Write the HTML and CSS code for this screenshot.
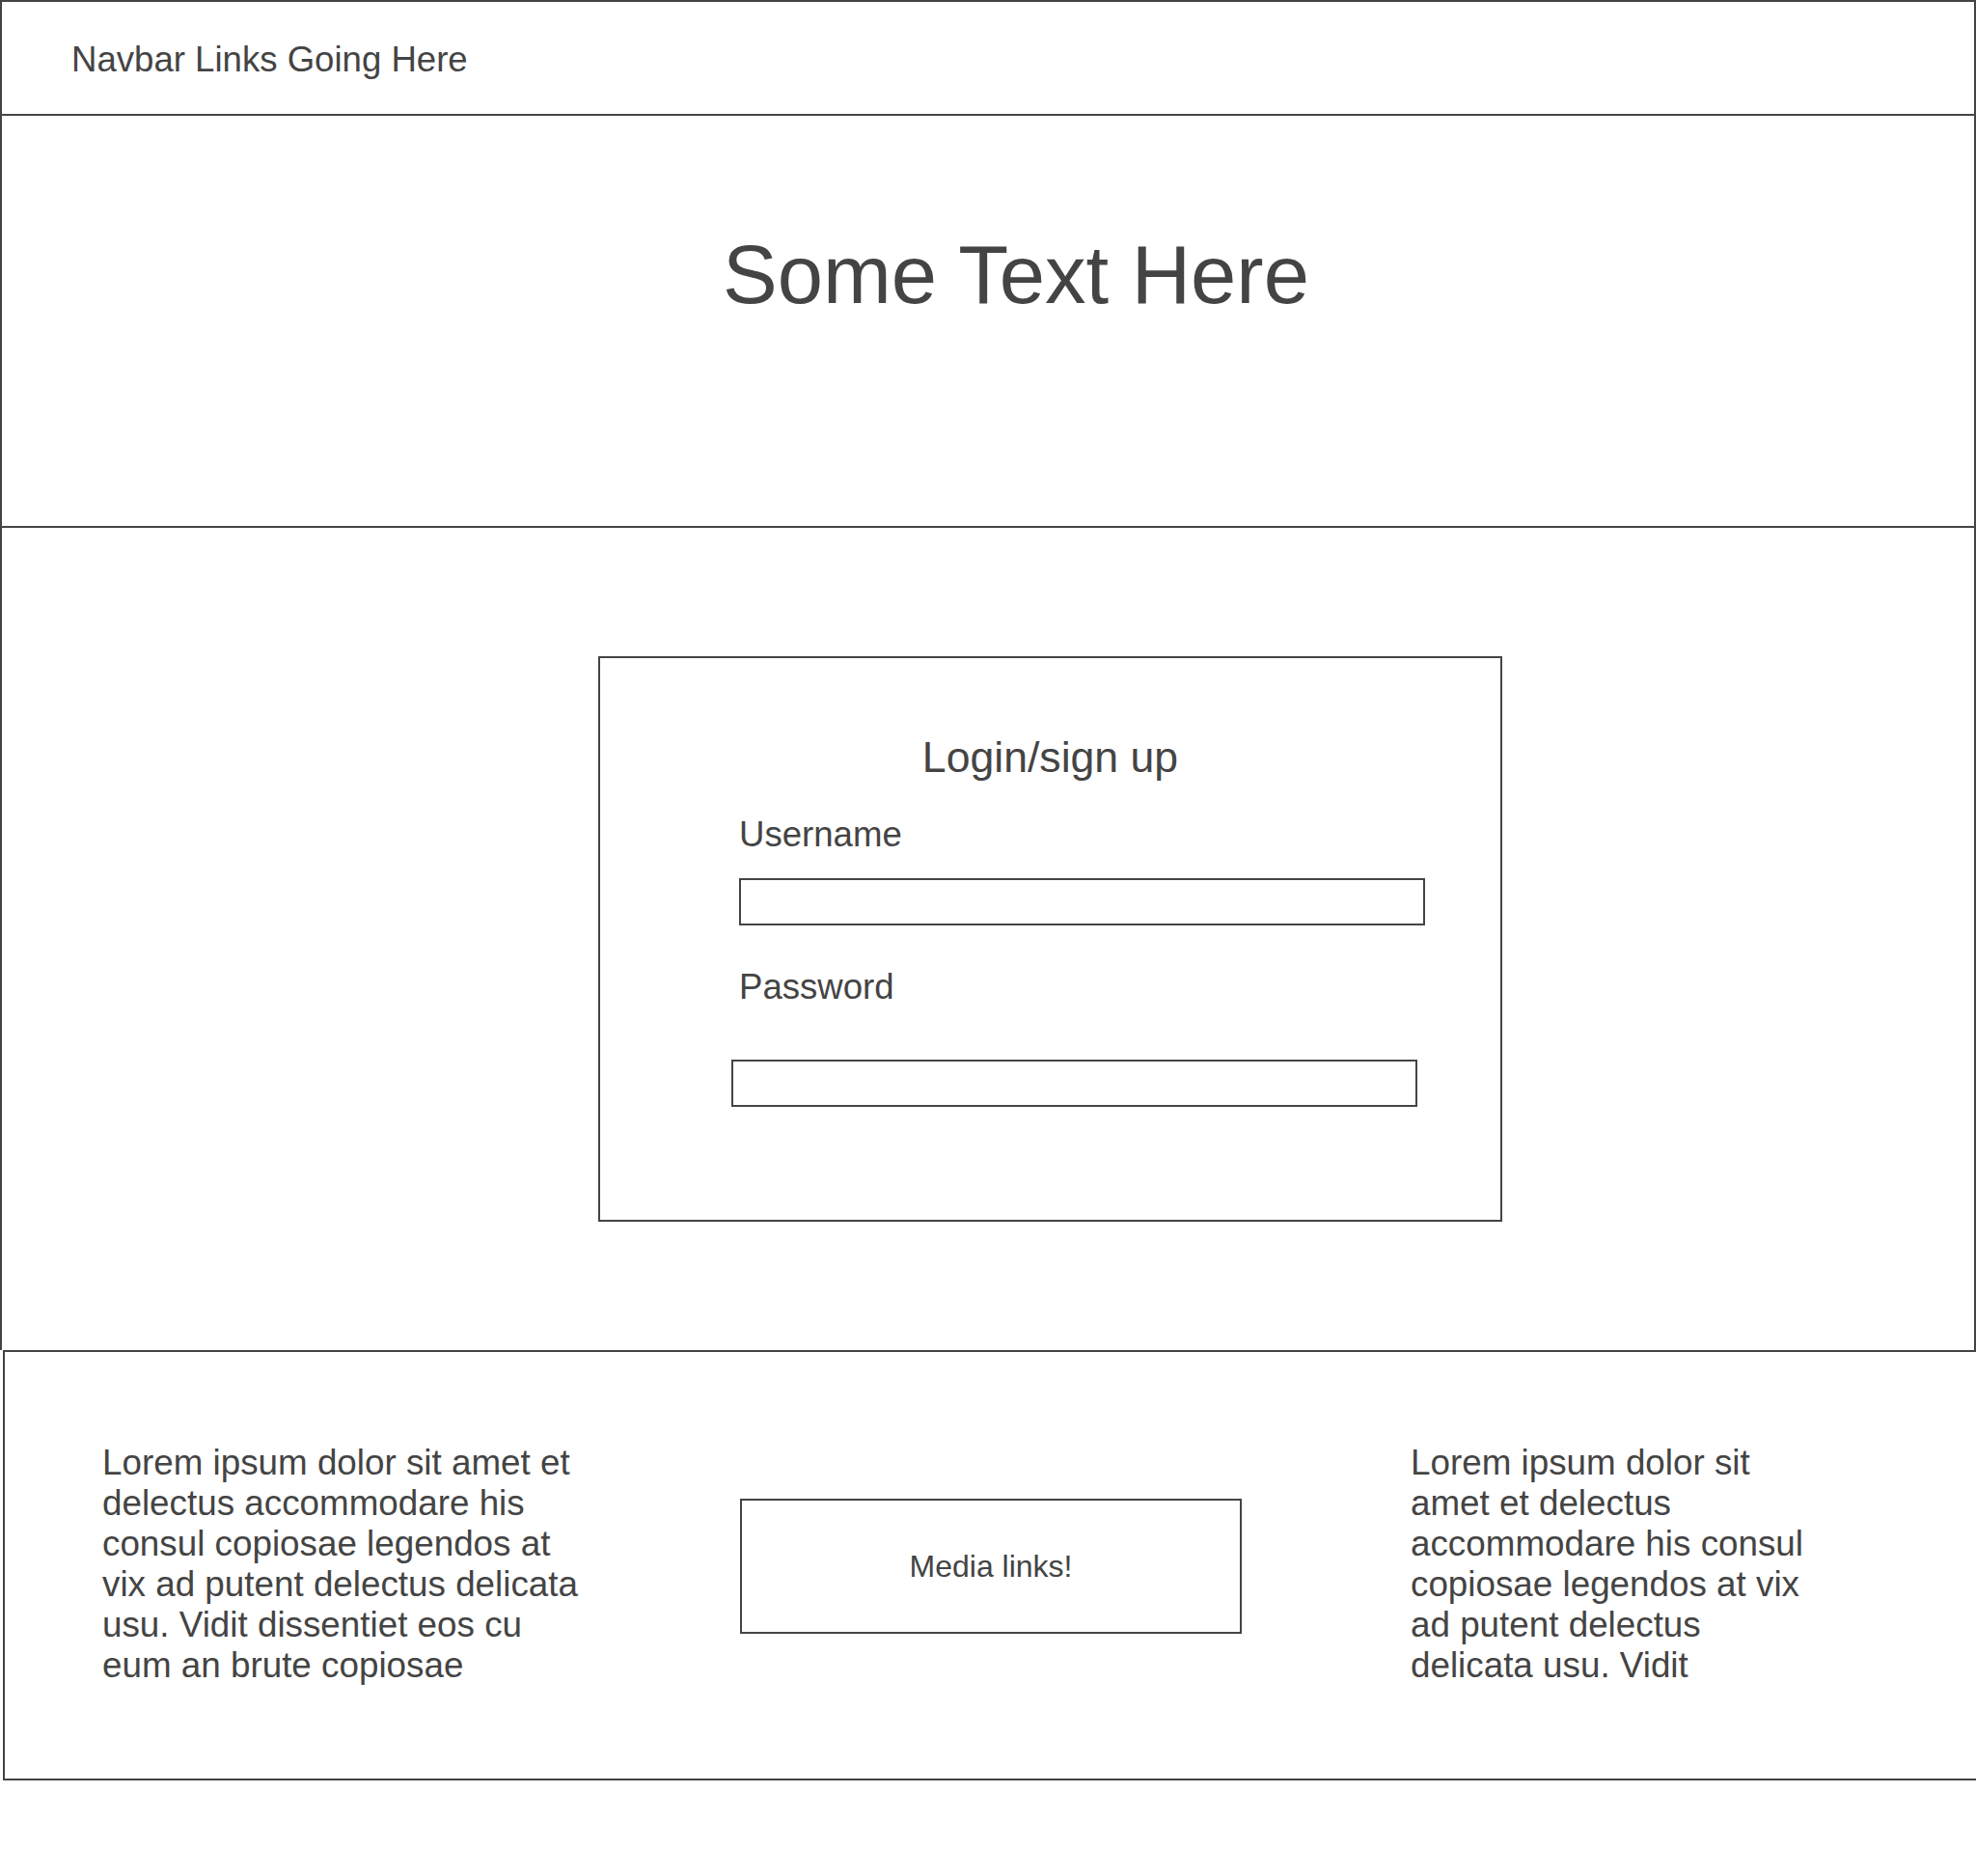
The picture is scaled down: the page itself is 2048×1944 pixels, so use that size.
FILE: index.html
```html
<!DOCTYPE html>
<html lang="en">
<head>
<meta charset="utf-8">
<title>Wireframe</title>
<link rel="stylesheet" href="styles.css">
</head>
<body>
<div class="page">
  <header class="navbar">
    <span class="nav-links">Navbar Links Going Here</span>
  </header>
  <section class="hero">
    <h1 class="hero-title">Some Text Here</h1>
  </section>
  <main class="main">
    <div class="login-card">
      <h2 class="login-title">Login/sign up</h2>
      <div class="login-form">
        <label class="field-label" for="username">Username</label>
        <input class="field-input" id="username" type="text">
        <label class="field-label field-label-password" for="password">Password</label>
        <input class="field-input field-input-password" id="password" type="password">
      </div>
    </div>
  </main>
  <footer class="footer">
    <p class="footer-text footer-text-left">Lorem ipsum dolor sit amet et<br>delectus accommodare his<br>consul copiosae legendos at<br>vix ad putent delectus delicata<br>usu. Vidit dissentiet eos cu<br>eum an brute copiosae</p>
    <div class="media-box">Media links!</div>
    <p class="footer-text footer-text-right">Lorem ipsum dolor sit<br>amet et delectus<br>accommodare his consul<br>copiosae legendos at vix<br>ad putent delectus<br>delicata usu. Vidit</p>
  </footer>
</div>
</body>
</html>
```

FILE: styles.css
```css
* {
  box-sizing: border-box;
}

html, body {
  margin: 0;
  padding: 0;
  background: #ffffff;
}

body {
  width: 2048px;
  min-height: 1944px;
  overflow: hidden;
  font-family: "Liberation Sans", Arial, sans-serif;
  color: #444444;
}

.page {
  display: flex;
  flex-direction: column;
  width: 2048px;
}

/* Navbar */
.navbar {
  height: 120px;
  border: 2px solid #444444;
  padding: 42px 0 0 72px;
}

.nav-links {
  display: block;
  font-size: 36.6px;
  line-height: 36.6px;
}

/* Hero */
.hero {
  height: 427px;
  border-left: 2px solid #444444;
  border-right: 2px solid #444444;
  border-bottom: 2px solid #444444;
  padding: 122px 0 0 58px;
}

.hero-title {
  margin: 0;
  font-size: 85px;
  line-height: 85px;
  font-weight: normal;
  text-align: center;
}

/* Main */
.main {
  height: 852px;
  border-left: 2px solid #444444;
  border-right: 2px solid #444444;
  padding: 133px 0 0 618px;
}

.login-card {
  width: 937px;
  height: 586px;
  border: 2px solid #444444;
  padding-top: 81px;
}

.login-title {
  margin: 0;
  font-size: 44.6px;
  line-height: 44px;
  font-weight: normal;
  text-align: center;
}

.login-form {
  display: flex;
  flex-direction: column;
  align-items: flex-start;
  padding-left: 144px;
  margin-top: 40px;
}

.field-label {
  display: block;
  font-size: 36.6px;
  line-height: 36px;
}

.field-input {
  display: block;
  width: 711px;
  height: 49px;
  margin: 27px 0 0 0;
  padding: 0;
  border: 2px solid #444444;
  background: #ffffff;
  outline: none;
}

.field-label-password {
  margin-top: 46px;
}

.field-input-password {
  margin-top: 57px;
  margin-left: -8px;
}

/* Footer */
.footer {
  display: flex;
  align-items: flex-start;
  height: 446px;
  margin-left: 3px;
  border-top: 2px solid #444444;
  border-left: 2px solid #444444;
  border-bottom: 2px solid #444444;
  padding: 94px 0 0 101px;
}

.footer-text {
  margin: 0;
  font-size: 36.8px;
  line-height: 42px;
  white-space: nowrap;
}

.footer-text-left {
  width: 661px;
  flex: none;
}

.media-box {
  display: flex;
  flex: none;
  align-items: center;
  justify-content: center;
  width: 520px;
  height: 140px;
  margin-top: 58px;
  border: 2px solid #444444;
  font-size: 32px;
  line-height: 32px;
}

.footer-text-right {
  margin-left: 175px;
  width: 440px;
  flex: none;
}
```
